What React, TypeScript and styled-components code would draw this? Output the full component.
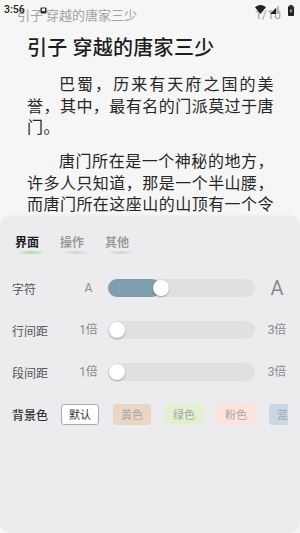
import React from 'react'
import styled, { createGlobalStyle } from 'styled-components'

const GlobalStyle = createGlobalStyle`
  html, body {
    margin: 0;
    padding: 0;
    background: #f6f6f6;
  }
  * {
    box-sizing: border-box;
  }
`

const FONT = `'Noto Sans CJK SC', 'Noto Sans', sans-serif`

const StyledPage = styled.div`
  position: relative;
  width: 300px;
  height: 533px;
  overflow: hidden;
  background: #f6f6f6;
  font-family: ${FONT};
`

const StyledStatusBar = styled.div`
  position: absolute;
  top: 0;
  left: 0;
  right: 0;
  height: 20px;
  display: flex;
  align-items: flex-start;
  justify-content: space-between;
  padding: 4px 5px 0 4px;
  z-index: 2;
`

const StyledTime = styled.span`
  font-family: 'Roboto', sans-serif;
  font-size: 10.5px;
  line-height: 12px;
  font-weight: 500;
  color: #222;
  display: flex;
  align-items: center;
  gap: 15px;
`

const StyledStatusIcons = styled.div`
  display: flex;
  align-items: flex-start;
  gap: 4px;
  padding-top: 1px;
`

const StyledReaderHead = styled.div`
  display: flex;
  justify-content: space-between;
  align-items: center;
  padding: 7px 19px 0 17px;
  font-size: 13px;
  line-height: 16px;
  color: #a2a2a2;
`

const StyledPageNum = styled.span`
  font-family: 'Roboto', sans-serif;
  font-size: 12.5px;
`

const StyledTitle = styled.h1`
  margin: 10px 0 0 27px;
  font-size: 20px;
  line-height: 28px;
  font-weight: 500;
  color: #1d1d1d;
  letter-spacing: 0.3px;
`

const StyledBody = styled.div`
  padding: 12px 26px 0 27px;
`

const StyledParagraph = styled.p`
  margin: 0 0 12.5px;
  font-size: 16px;
  line-height: 21.5px;
  letter-spacing: 0.45px;
  text-indent: 2em;
  text-align: justify;
  color: #262626;
`

const StyledPanel = styled.div`
  position: absolute;
  left: 0;
  right: 0;
  top: 216px;
  bottom: 0;
  background: #ececee;
  border-radius: 12px;
  padding: 17px 0 0 12px;
  box-shadow: 0 -1px 3px rgba(0, 0, 0, 0.04);
`

const StyledTabs = styled.div`
  display: flex;
  gap: 21px;
  padding-left: 3px;
  margin-bottom: 28px;
`

const StyledTab = styled.span<{ $active: boolean }>`
  position: relative;
  font-size: 12px;
  line-height: 18px;
  font-weight: 700;
  color: ${(p) => (p.$active ? '#1b1b1b' : '#9b9b9b')};
  &::after {
    content: '';
    position: absolute;
    left: 4px;
    bottom: -3px;
    width: 24px;
    height: 3px;
    border-radius: 2px;
    background: ${(p) =>
      p.$active
        ? 'linear-gradient(90deg, rgba(150, 215, 140, 0.15), rgba(150, 215, 140, 0.7), rgba(150, 215, 140, 0.1))'
        : 'linear-gradient(90deg, rgba(170, 170, 170, 0.05), rgba(170, 170, 170, 0.35), rgba(170, 170, 170, 0.05))'};
    filter: blur(0.6px);
  }
`

const StyledRow = styled.div`
  display: flex;
  align-items: center;
  height: 18px;
  margin-bottom: 24px;
`

const StyledLabel = styled.span<{ $strong?: boolean }>`
  width: 49px;
  font-size: 12px;
  color: ${(p) => (p.$strong ? '#333' : '#555')};
  font-weight: ${(p) => (p.$strong ? 500 : 400)};
`

const StyledEdge = styled.span<{ $big?: boolean; $right?: boolean }>`
  width: ${(p) => (p.$right ? '44px' : '47px')};
  text-align: center;
  padding: ${(p) => (p.$right ? '0' : '0 2px 0 10px')};
  font-family: 'Roboto', ${FONT};
  font-size: ${(p) => (p.$big ? '20px' : '12px')};
  line-height: 18px;
  color: #8a8a8a;
`

const StyledTrack = styled.div`
  position: relative;
  width: 147px;
  height: 18px;
  border-radius: 9px;
  background: #e0e0e2;
`

const StyledFill = styled.div`
  position: absolute;
  left: 0;
  top: 0;
  bottom: 0;
  border-radius: 9px;
  background: #7f9eaf;
`

const StyledThumb = styled.div`
  position: absolute;
  top: 1px;
  width: 16px;
  height: 16px;
  margin-left: -8px;
  border-radius: 50%;
  background: #fff;
  box-shadow: 0 1px 2px rgba(0, 0, 0, 0.3);
`

const StyledSwatches = styled.div`
  display: flex;
  gap: 14px;
  width: 227px;
  overflow: hidden;
`

const StyledSwatch = styled.div<{ $bg: string; $selected?: boolean }>`
  flex: 0 0 38px;
  height: 21px;
  border-radius: 3px;
  background: ${(p) => p.$bg};
  border: 1px solid ${(p) => (p.$selected ? '#9fb0bc' : p.$bg)};
  display: flex;
  align-items: center;
  justify-content: center;
  font-size: 11px;
  color: ${(p) => (p.$selected ? '#333' : '#a8a8a8')};
`

const Slider: React.FC<{ value: number }> = ({ value }) => (
  <StyledTrack>
    {value > 0 && <StyledFill style={{ width: `${value * 100}%` }} />}
    <StyledThumb style={{ left: `calc(${value * 100}% + ${value > 0 ? 0 : 9}px)` }} />
  </StyledTrack>
)

const swatches = [
  { name: '默认', bg: '#ffffff', selected: true },
  { name: '黄色', bg: '#ead6c4' },
  { name: '绿色', bg: '#e2efd0' },
  { name: '粉色', bg: '#fde3dc' },
  { name: '蓝色', bg: '#cad7e4' },
]

export default function App() {
  return (
    <StyledPage>
      <GlobalStyle />
      <StyledStatusBar>
        <StyledTime>
          3:56
          <svg width="7" height="7" viewBox="0 0 7 7">
            <rect x="0.5" y="0.5" width="6" height="6" rx="0.8" fill="#333" />
            <rect x="2" y="1.5" width="3" height="2.5" fill="#f6f6f6" />
          </svg>
        </StyledTime>
        <StyledStatusIcons>
          <svg width="11" height="9" viewBox="0 0 11 9">
            <path d="M0 2.2 Q5.5 -2 11 2.2 L5.5 9 Z" fill="#222" />
          </svg>
          <svg width="9" height="9" viewBox="0 0 9 9">
            <path d="M0 9 L9 0 L9 9 Z" fill="#bbb" />
            <path d="M0 9 L6 3 L6 9 Z" fill="#222" />
          </svg>
          <svg width="8" height="11" viewBox="0 0 8 11" style={{ marginLeft: 4 }}>
            <rect x="2.5" y="0" width="3" height="1.5" fill="#222" />
            <rect x="1" y="1.2" width="6" height="9.8" rx="0.8" fill="#222" />
            <path d="M4.6 3 L2.8 6.3 H4 L3.4 8.8 L5.2 5.4 H4 Z" fill="#f6f6f6" />
          </svg>
        </StyledStatusIcons>
      </StyledStatusBar>

      <StyledReaderHead>
        <span>引子 穿越的唐家三少</span>
        <StyledPageNum>1/10</StyledPageNum>
      </StyledReaderHead>
      <StyledTitle>引子 穿越的唐家三少</StyledTitle>
      <StyledBody>
        <StyledParagraph>巴蜀，历来有天府之国的美誉，其中，最有名的门派莫过于唐门。</StyledParagraph>
        <StyledParagraph>
          唐门所在是一个神秘的地方，许多人只知道，那是一个半山腰，而唐门所在这座山的山顶有一个令人向往的地方，那里终年云雾缭绕。
        </StyledParagraph>
      </StyledBody>

      <StyledPanel>
        <StyledTabs>
          <StyledTab $active>界面</StyledTab>
          <StyledTab $active={false}>操作</StyledTab>
          <StyledTab $active={false}>其他</StyledTab>
        </StyledTabs>

        <StyledRow>
          <StyledLabel>字符</StyledLabel>
          <StyledEdge>A</StyledEdge>
          <Slider value={0.36} />
          <StyledEdge $big $right>
            A
          </StyledEdge>
        </StyledRow>
        <StyledRow>
          <StyledLabel>行间距</StyledLabel>
          <StyledEdge>1倍</StyledEdge>
          <Slider value={0} />
          <StyledEdge $right>3倍</StyledEdge>
        </StyledRow>
        <StyledRow>
          <StyledLabel>段间距</StyledLabel>
          <StyledEdge>1倍</StyledEdge>
          <Slider value={0} />
          <StyledEdge $right>3倍</StyledEdge>
        </StyledRow>
        <StyledRow>
          <StyledLabel $strong>背景色</StyledLabel>
          <StyledSwatches>
            {swatches.map((s) => (
              <StyledSwatch key={s.name} $bg={s.bg} $selected={s.selected}>
                {s.name}
              </StyledSwatch>
            ))}
          </StyledSwatches>
        </StyledRow>
      </StyledPanel>
    </StyledPage>
  )
}
